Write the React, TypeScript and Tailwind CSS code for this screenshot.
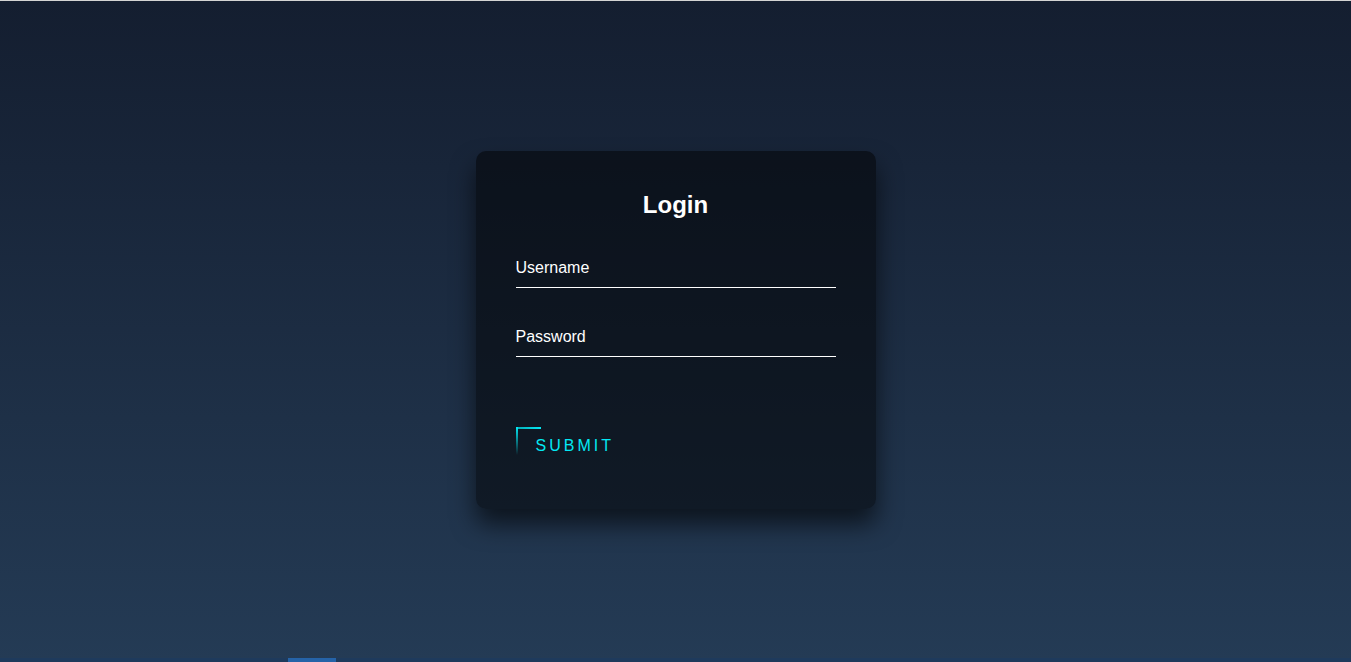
export default function App() {
  return (
    <div className="flex h-[662px] flex-col overflow-hidden bg-gradient-to-b from-[#141e30] to-[#243b55] font-['Liberation_Sans',Arial,sans-serif]">
      <div className="h-px w-full bg-[#d4d4d4]" />

      <main className="flex flex-1 items-center justify-center">
        {/* Login box */}
        <div className="w-[400px] rounded-[10px] bg-black/50 p-10 pb-[37px] shadow-[0_15px_25px_rgba(0,0,0,0.6)]">
          <h2 className="mb-[30px] text-center text-2xl leading-[28px] font-bold text-white">Login</h2>
          <form>
            <div className="relative">
              <input
                type="text"
                className="mb-[30px] w-full border-0 border-b border-white bg-transparent py-[10px] text-base leading-[18px] text-white outline-none"
              />
              <label className="pointer-events-none absolute top-0 left-0 py-[10px] text-base leading-[18px] text-white">
                Username
              </label>
            </div>
            <div className="relative">
              <input
                type="password"
                className="mb-[30px] w-full border-0 border-b border-white bg-transparent py-[10px] text-base leading-[18px] text-white outline-none"
              />
              <label className="pointer-events-none absolute top-0 left-0 py-[10px] text-base leading-[18px] text-white">
                Password
              </label>
            </div>
            <a
              href="#"
              className="relative mt-10 inline-block overflow-hidden px-5 py-[10px] text-base leading-[18px] tracking-[3px] text-[#03e9f4] uppercase"
            >
              {/* animated border spans, frozen mid-way */}
              <span className="absolute top-0 left-0 h-[2px] w-[25px] bg-gradient-to-r from-[#03e9f4]/70 to-[#03e9f4]" />
              <span className="absolute top-0 left-0 h-[28px] w-[2px] bg-gradient-to-b from-[#03e9f4] to-transparent" />
              Submit
            </a>
          </form>
        </div>
      </main>

      <div className="flex h-1 w-full bg-[#1e3a5c]">
        <div className="ml-[288px] h-full w-12 bg-[#2563a8]" />
      </div>
    </div>
  );
}
